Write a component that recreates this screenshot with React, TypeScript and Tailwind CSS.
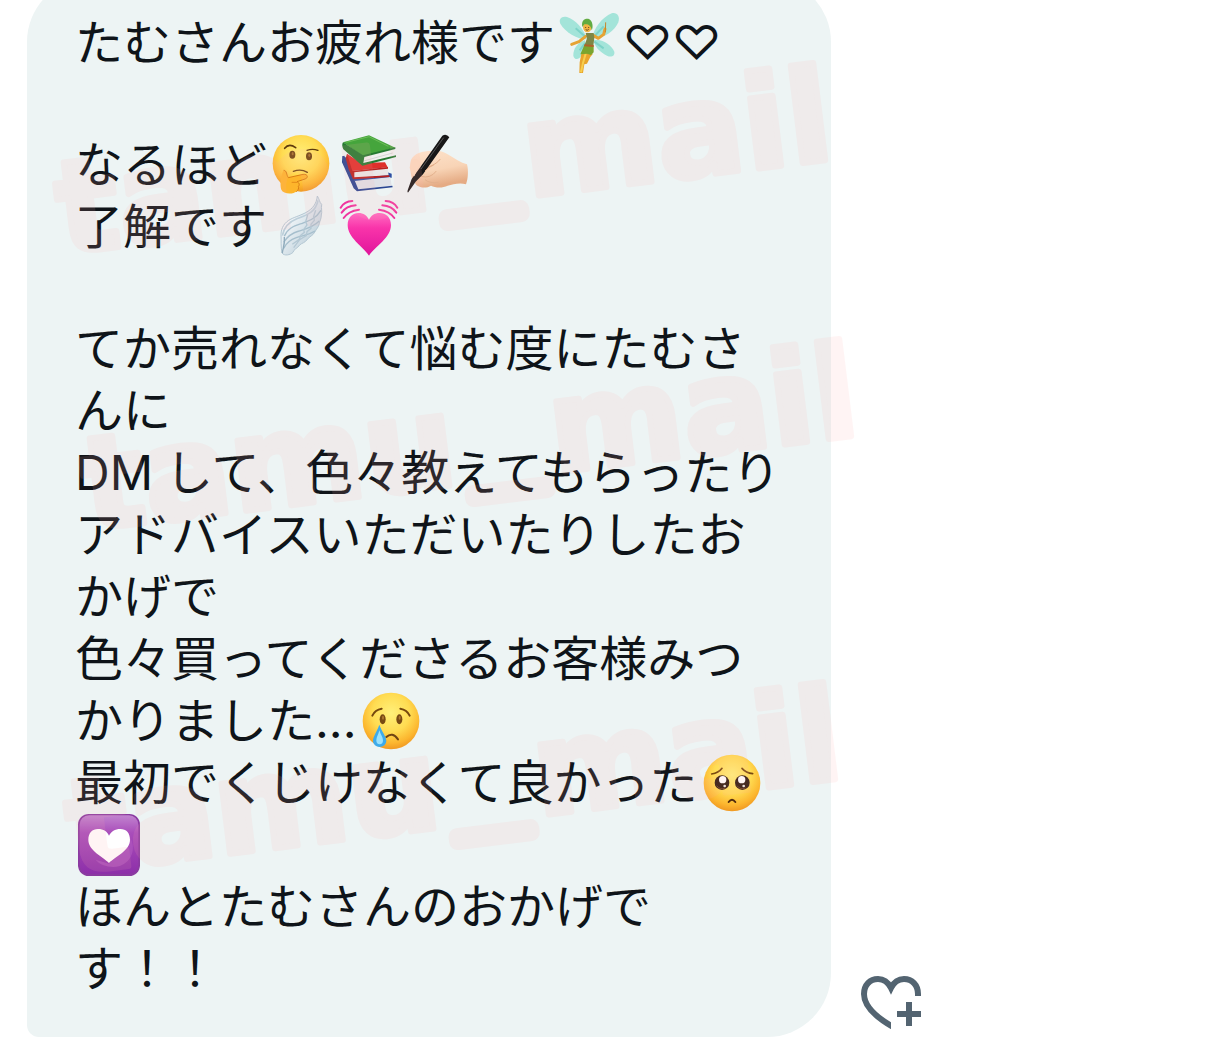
import React, { useId } from 'react'

const Emoji: React.FC<{ label: string; children: React.ReactNode }> = ({ label, children }) => (
  <svg
    role="img"
    aria-label={label}
    viewBox="0 0 180 180"
    className="inline-block align-top w-[60px] h-[60px] mx-1 mt-px overflow-visible"
  >
    {children}
  </svg>
)

const Face: React.FC<{ label: string; cy?: number; children: React.ReactNode }> = ({ label, cy = 90, children }) => {
  const id = useId()

  return (
    <Emoji label={label}>
      <defs>
        <radialGradient id={id} cx="50%" cy="36%" r="66%">
          <stop offset="0" stopColor="#fff07a" />
          <stop offset="0.5" stopColor="#ffdc52" />
          <stop offset="0.8" stopColor="#fcb62f" />
          <stop offset="1" stopColor="#ee9420" />
        </radialGradient>
      </defs>
      <circle cx="90" cy={cy} r="85" fill={`url(#${id})`} />
      {children}
    </Emoji>
  )
}

const Fairy = () => (
  <Emoji label="妖精">
    <g fill="#a3e4d9">
      <path d="M84 78C62 82 20 60 4 32C-2 18 8 8 24 12C48 20 74 46 84 78Z" />
      <path d="M100 76C102 48 130 12 158 1C174-3 184 10 178 28C168 54 132 78 100 76Z" />
      <path d="M78 82C56 88 42 108 43 128C46 142 60 140 66 130C74 116 82 100 78 82Z" />
      <path d="M104 82C130 76 158 96 166 116C168 130 156 134 144 128C122 118 106 100 104 82Z" />
    </g>
    <path d="M50 46L80 72M134 40L104 72M62 112L78 90M134 106L106 86" stroke="#7dd3c8" strokeWidth="6" fill="none" />
    <path d="M80 70L60 86L38 94M104 68L118 76L134 64L138 48" stroke="#e6a333" strokeWidth="9" fill="none" strokeLinecap="round" strokeLinejoin="round" />
    <path d="M140 28L139 58" stroke="#c6862b" strokeWidth="3" />
    <path d="M68 118L102 122L94 132L84 152L76 154L72 180L61 180L62 148Z" fill="#e8a52d" />
    <path d="M80 122L72 150L66 178" stroke="#f7cf4e" strokeWidth="6" fill="none" />
    <path d="M80 60L104 60L106 74L103 98L76 98L84 76Z" fill="#7d8745" />
    <path d="M76 96L104 98L104 118L96 126L84 122L64 124Z" fill="#7aa52f" />
    <path d="M76 97L104 99" stroke="#b2602a" strokeWidth="6" />
    <ellipse cx="85" cy="42" rx="13" ry="16" fill="#f0b444" />
    <path d="M70 42C66 22 78 15 90 18C102 24 103 44 98 52C96 36 86 32 76 34Z" fill="#62ab42" />
    <path d="M80 42V45M89 42V45M80 50Q85 54 89 49" stroke="#704420" strokeWidth="3" fill="none" />
  </Emoji>
)

const Thinking = () => (
  <Face label="考える顔" cy={85}>
    <path d="M41 40Q54 24 74 38" stroke="#5f3b0c" strokeWidth="5" fill="none" strokeLinecap="round" />
    <path d="M108 46Q124 40 141 46" stroke="#5f3b0c" strokeWidth="4" fill="none" strokeLinecap="round" />
    <ellipse cx="64" cy="59" rx="9" ry="12" fill="#6c430f" />
    <ellipse cx="114" cy="64" rx="9" ry="12" fill="#6c430f" />
    <ellipse cx="65" cy="56" rx="3" ry="5" fill="#a5702a" />
    <ellipse cx="115" cy="61" rx="3" ry="5" fill="#a5702a" />
    <path d="M67 109Q90 100 109 112" stroke="#704713" strokeWidth="4" fill="none" strokeLinecap="round" />
    <path
      d="M38 106C48 106 46 120 52 128L96 118C110 116 114 128 102 132L78 140C86 144 86 150 82 154C86 162 80 170 68 174C52 178 36 174 31 164C26 152 29 120 38 106Z"
      fill="#fdb52b"
    />
    <path d="M38 106C48 106 46 120 52 128L96 118C110 116 114 128 102 132L78 140C86 144 86 150 82 154C84 160 82 165 76 170" fill="none" stroke="#d97e14" strokeWidth="3" />
    <path d="M62 142H78" stroke="#e48b19" strokeWidth="3" />
  </Face>
)

const Books = () => (
  <Emoji label="本">
    <path d="M10 64L34 72L158 116V128L56 141L46 137Z" fill="#2c4da1" />
    <path d="M46 138L154 126L158 152L58 163Z" fill="#dfe1e7" />
    <path d="M10 64L16 62L58 163L160 152L161 157L54 169L44 160L9 82Z" fill="#294591" />
    <path d="M24 56L66 84L138 82L147 98L40 109L26 80Z" fill="#df302b" />
    <path d="M40 108L145 97L149 121L44 129Z" fill="#e9e7e7" />
    <path d="M24 56L40 108L147 96V101L46 112L46 127L151 121V126L42 133L29 103L20 70Z" fill="#b9211f" />
    <path d="M12 22L90 1L169 38L72 64Z" fill="#45a53c" />
    <path d="M72 64L168 40L162 64L70 87Z" fill="#f0f0ee" />
    <path d="M74 78L161 54" stroke="#c6c8c6" strokeWidth="2" />
    <path d="M12 22L72 61L169 37V42L76 66L73 84L171 61V66L70 92L13 43Q7 30 12 22Z" fill="#267a31" />
    <path d="M22 22L90 5L148 34" stroke="#6bbd57" strokeWidth="3" fill="none" />
  </Emoji>
)

const WritingHand = () => {
  const id = useId()

  return (
    <Emoji label="書いている手">
      <defs>
        <linearGradient id={id} x1="0" y1="0" x2="0.3" y2="1">
          <stop offset="0" stopColor="#fde3cc" />
          <stop offset="0.6" stopColor="#f8d4b6" />
          <stop offset="1" stopColor="#e5ab84" />
        </linearGradient>
      </defs>
      <path
        d="M12 75C22 54 46 48 72 48C90 44 108 50 122 58C142 70 162 84 180 88C185 106 183 134 177 148C158 142 138 148 122 152C106 160 84 158 72 152C56 162 30 158 24 144C10 132 8 98 12 75Z"
        fill={`url(#${id})`}
      />
      <path d="M100 72C88 88 68 96 50 98M42 124Q70 132 88 108M54 134Q68 146 94 142" stroke="#e3b08c" strokeWidth="3" fill="none" />
      <path d="M106 2Q118-6 127 7L48 118L26 140L4 172Q0 174 2 166L14 132L36 102Z" fill="#171717" />
      <path d="M110 8L42 102" stroke="#555" strokeWidth="3" />
      <path d="M12 76C26 68 36 74 38 86L22 124C14 116 10 106 8 98Z" fill="#fbdabf" />
      <path d="M54 108Q64 96 80 90" stroke="#e1ad87" strokeWidth="3" fill="none" />
    </Emoji>
  )
}

const Wing = () => {
  const id = useId()

  return (
    <Emoji label="羽">
      <defs>
        <linearGradient id={id} x1="0" y1="0" x2="1" y2="1">
          <stop offset="0.3" stopColor="#f0f5f8" />
          <stop offset="1" stopColor="#acc3d0" />
        </linearGradient>
      </defs>
      <path
        d="M139-3C146 8 145 16 152 22C150 36 154 44 151 54C151 66 146 72 145 80C142 92 136 96 132 104C126 116 116 118 110 126C102 138 92 138 86 144C80 154 68 156 66 166C58 174 40 178 33 168C29 148 31 132 30 112C31 92 40 76 60 66C88 52 134 46 139-3Z"
        fill={`url(#${id})`}
        stroke="#b3c7d3"
        strokeWidth="3"
      />
      <path d="M141 10C134 48 102 56 76 66C50 76 38 96 34 116" stroke="#bccfda" strokeWidth="5" fill="none" />
      <path
        d="M150 40C134 66 112 72 90 80C66 88 48 96 40 118M145 72C124 92 104 96 84 102C62 108 48 120 38 136M132 102C112 114 94 116 76 122C58 128 46 138 38 154"
        stroke="#a6bfcd"
        strokeWidth="4"
        fill="none"
      />
      <path d="M110 54L104 74L108 84L98 98L100 106L88 116L86 126L64 142M134 40L128 58L130 70L120 82L120 94L108 104L106 116L86 128L68 152" stroke="#b4c8d4" strokeWidth="4" fill="none" />
      <path d="M34 168C36 150 42 146 40 120" stroke="#8fabbc" strokeWidth="4" fill="none" />
    </Emoji>
  )
}

const BeatingHeart = () => {
  const id = useId()

  return (
    <Emoji label="ドキドキするハート">
      <defs>
        <linearGradient id={id} x1="0" y1="0" x2="0" y2="1">
          <stop offset="0" stopColor="#ff6cc2" />
          <stop offset="0.35" stopColor="#f934aa" />
          <stop offset="1" stopColor="#e0149b" />
        </linearGradient>
      </defs>
      <path
        d="M90 176C70 147 26 122 26 84C26 60 42 48 58 48C74 48 84 56 90 68C96 56 106 48 122 48C140 48 156 60 156 84C156 122 110 147 90 176Z"
        fill={`url(#${id})`}
      />
      <g stroke="#f0349f" strokeWidth="6" fill="none" strokeLinecap="round">
        <path d="M5 32Q16 13 40 12M8 47Q22 27 50 25M14 63Q28 42 60 38" />
        <path d="M175 32Q164 13 140 12M172 47Q158 27 130 25M166 63Q152 42 120 38" />
      </g>
    </Emoji>
  )
}

const Crying = () => (
  <Face label="泣き顔">
    <path d="M34 74Q42 56 62 53M118 53Q138 56 146 74" stroke="#75480e" strokeWidth="6" fill="none" strokeLinecap="round" />
    <ellipse cx="65" cy="85" rx="9" ry="15" fill="#784a13" />
    <ellipse cx="115" cy="85" rx="9" ry="15" fill="#784a13" />
    <ellipse cx="66" cy="80" rx="3" ry="6" fill="#ad7830" />
    <ellipse cx="116" cy="80" rx="3" ry="6" fill="#ad7830" />
    <path d="M76 138Q94 121 111 145" stroke="#704413" strokeWidth="6" fill="none" strokeLinecap="round" />
    <path d="M55 101C62 122 76 136 76 150A20 18 0 0 1 36 150C36 136 48 122 55 101Z" fill="#3eabea" />
    <path d="M55 118C58 130 66 138 66 148A10 12 0 0 1 46 148C46 138 53 130 55 118Z" fill="#9ce2fb" />
  </Face>
)

const Pleading = () => (
  <Face label="訴えかける顔">
    <path d="M29 63Q50 60 60 46M120 46Q132 60 152 62" stroke="#79490f" strokeWidth="5" fill="none" strokeLinecap="round" />
    <circle cx="60" cy="89" r="22" fill="#2d180e" />
    <circle cx="121" cy="89" r="22" fill="#2d180e" />
    <path d="M44 98Q54 112 70 105M105 98Q115 112 131 105" stroke="#6d4020" strokeWidth="3" fill="none" />
    <circle cx="62" cy="80" r="11" fill="#fff" />
    <circle cx="119" cy="80" r="11" fill="#fff" />
    <circle cx="68" cy="99" r="4" fill="#e9e4df" />
    <circle cx="125" cy="99" r="4" fill="#e9e4df" />
    <path d="M80 147Q90 134 100 147" stroke="#522b0e" strokeWidth="6" fill="none" strokeLinecap="round" />
  </Face>
)

const HeartBox = () => {
  const id = useId()

  return (
    <Emoji label="ハートのデコレーション">
      <defs>
        <linearGradient id={id} x1="0" y1="0" x2="0" y2="1">
          <stop offset="0" stopColor="#c183cf" />
          <stop offset="0.3" stopColor="#a94dba" />
          <stop offset="1" stopColor="#8d2fa9" />
        </linearGradient>
      </defs>
      <rect x="-3" y="-3" width="186" height="186" rx="32" fill="#8a3aa0" />
      <rect x="2" y="1" width="176" height="176" rx="28" fill={`url(#${id})`} />
      <path d="M150 64C172 92 164 140 120 154C92 160 62 150 50 134L90 146Z" fill="#b35abf" opacity="0.6" />
      <path
        d="M90 144C72 124 28 108 28 74C28 54 40 42 57 42C74 42 85 50 90 62C96 50 108 42 124 42C142 42 153 54 153 74C153 108 108 124 90 144Z"
        fill="#fff"
      />
    </Emoji>
  )
}

const HeartPlusIcon = () => {
  const id = useId()

  return (
    <svg viewBox="0 0 60 54" className="w-[60px] h-[54px]" aria-hidden="true">
      <defs>
        <clipPath id={id}>
          <path d="M0 0H60V21H30V54H0Z" />
        </clipPath>
      </defs>
      <path
        d="M57 24V19C57 10 51 4 43 4C37 4 33 7 30 13C27 7 23 4 17 4C9 4 3 10 3 19C3 31 14 42 34 53"
        fill="none"
        stroke="#536471"
        strokeWidth="6"
        clipPath={`url(#${id})`}
      />
      <path d="M45 27H51V36H60V42H51V51H45V42H36V36H45Z" fill="#536471" />
    </svg>
  )
}

const Watermark: React.FC<{ className: string }> = ({ className }) => (
  <svg
    aria-hidden="true"
    className={`absolute w-[780px] h-[130px] origin-bottom-left -rotate-7 overflow-visible opacity-[0.12] ${className}`}
  >
    <text
      y="130"
      fill="#ffacac"
      stroke="#ffacac"
      strokeWidth="6"
      strokeLinejoin="round"
      className="font-['DejaVu_Sans'] font-bold text-[129px]"
    >
      tamu
      <tspan dx="13" strokeWidth="17" className="font-['Liberation_Sans']">_</tspan>
      <tspan dx="10">mail</tspan>
    </text>
  </svg>
)

export default function App() {
  return (
    <main className="relative overflow-hidden bg-white">
      <div className="flex items-end gap-[30px] pb-[3px]">
        {/* Message bubble */}
        <div className="-mt-[22px] ml-[27px] w-2/3 shrink-0 rounded-[64px] rounded-bl-[12px] bg-[#edf4f4] pt-[34px] pr-10 pb-[37px] pl-12 font-['Inter','Noto_Sans_CJK_JP',sans-serif] text-[48px] leading-[62px] text-[#0f1419]">
          <div lang="ja" className="flex flex-col gap-[60px]">
            <p>
              たむさんお疲れ様です<Fairy />♡♡
            </p>
            <p>
              なるほど<Thinking /><Books /><WritingHand />
              <br />
              了解です<Wing /><BeatingHeart />
            </p>
            <p>
              てか売れなくて悩む度にたむさんに
              <br />
              <span className="mr-3">DM</span>して、色々教えてもらったり
              <br />
              アドバイスいただいたりしたおかげで
              <br />
              色々買ってくださるお客様みつかりました...<Crying />
              <br />
              最初でくじけなくて良かった<Pleading /><HeartBox />
              <br />
              ほんとたむさんのおかげです！！
            </p>
          </div>
        </div>

        <button type="button" aria-label="リアクションを追加" className="mb-2">
          <HeartPlusIcon />
        </button>
      </div>

      {/* Watermarks over the conversation */}
      <div className="pointer-events-none absolute inset-0">
        <Watermark className="left-[62px] top-[124px]" />
        <Watermark className="left-[88px] top-[400px]" />
        <Watermark className="left-[72px] top-[743px]" />
      </div>
    </main>
  )
}
